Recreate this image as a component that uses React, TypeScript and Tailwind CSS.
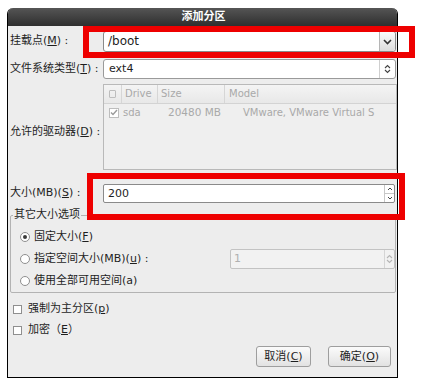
import React from 'react';

// small gray radio like the GTK Clearlooks one
const Radio = ({ checked }: { checked?: boolean }) => (
    <span className="w-[10px] h-[10px] rounded-full border border-[#8f8f8f] bg-white flex items-center justify-center shrink-0">
        {checked && <span className="w-[4px] h-[4px] rounded-full bg-[#3a3a3a]" />}
    </span>
);

const Check = () => (
    <span className="w-[9px] h-[9px] border border-[#8f8f8f] bg-white shrink-0" />
);

const DownArrow = () => (
    <svg width="9" height="6" viewBox="0 0 9 6">
        <path d="M1 1 L4.5 4.5 L8 1" fill="none" stroke="#333" strokeWidth="1.6" />
    </svg>
);

const UpDown = ({ color = '#444' }: { color?: string }) => (
    <svg width="7" height="10" viewBox="0 0 7 10">
        <path d="M1 4 L3.5 1.5 L6 4" fill="none" stroke={color} strokeWidth="1.1" />
        <path d="M1 6 L3.5 8.5 L6 6" fill="none" stroke={color} strokeWidth="1.1" />
    </svg>
);

const App: React.FC = () => {
    return (
        <div className="relative w-[423px] h-[389px] bg-white pt-[8px] pl-[7px] text-[11px] text-[#1e1e1e] font-['DejaVu_Sans','Noto_Sans_CJK_SC',sans-serif]">
            <div className="w-[391px] h-[370px] flex flex-col bg-[#ededed] border-x border-b border-black rounded-t-[6px] overflow-hidden">
                {/* title bar */}
                <div className="h-[18px] shrink-0 bg-gradient-to-b from-[#555555] to-[#2f2f2f] text-white font-bold text-[11px] leading-[18px] text-center pl-[2px]">
                    添加分区
                </div>

                <div className="flex flex-col pl-[2px]">
                    {/* mount point */}
                    <div className="flex items-center mt-[5px] h-[21px]">
                        <div className="w-[93px] whitespace-nowrap">挂载点(<u>M</u>) :</div>
                        <div className="flex w-[293px] h-[21px] bg-white border border-[#8a8a8a] rounded-[3px]">
                            <div className="flex-1 pl-[4px] leading-[19px] text-[12px]">/boot</div>
                            <div className="w-[16px] border-l border-[#b5b5b5] bg-gradient-to-b from-[#fafafa] to-[#dcdcdc] flex items-center justify-center rounded-r-[3px]">
                                <DownArrow />
                            </div>
                        </div>
                    </div>

                    {/* fs type */}
                    <div className="flex items-center mt-[7px] h-[20px]">
                        <div className="w-[93px] whitespace-nowrap">文件系统类型(<u>T</u>) :</div>
                        <div className="flex w-[293px] h-[20px] bg-white border border-[#9a9a9a] rounded-[3px]">
                            <div className="flex-1 pl-[5px] leading-[18px] text-[11px]">ext4</div>
                            <div className="w-[16px] border-l border-[#cfcfcf] flex items-center justify-center">
                                <UpDown />
                            </div>
                        </div>
                    </div>

                    {/* allowed drives */}
                    <div className="flex items-start mt-[5px]">
                        <div className="w-[93px] mt-[40px] whitespace-nowrap">允许的驱动器(<u>D</u>) :</div>
                        <div className="w-[294px] h-[86px] border border-[#b9b9b9] bg-[#efefef] text-[10px] text-[#a9a9a9]">
                            <div className="flex h-[19px] items-center border-b border-[#d3d3d3] bg-gradient-to-b from-[#f4f4f4] to-[#e8e8e8]">
                                <div className="w-[18px] h-full flex items-center justify-center border-r border-[#d6d6d6]">
                                    <span className="w-[7px] h-[8px] border border-[#bdbdbd] rounded-[1px]" />
                                </div>
                                <div className="w-[36px] h-full pl-[3px] leading-[18px] border-r border-[#d6d6d6]">Drive</div>
                                <div className="w-[67px] h-full pl-[3px] leading-[18px] border-r border-[#d6d6d6]">Size</div>
                                <div className="flex-1 pl-[4px] leading-[18px]">Model</div>
                            </div>
                            <div className="flex h-[17px] items-center">
                                <div className="w-[19px] pl-[5px] flex items-center">
                                    <span className="w-[10px] h-[10px] border border-[#bdbdbd] bg-white flex items-center justify-center">
                                        <svg width="8" height="7" viewBox="0 0 8 7">
                                            <path d="M1 3.5 L3 5.5 L7 1" fill="none" stroke="#9a9a9a" strokeWidth="1.4" />
                                        </svg>
                                    </span>
                                </div>
                                <div className="w-[36px]">sda</div>
                                <div className="w-[64px] text-right pr-[2px] text-[10.5px]">20480 MB</div>
                                <div className="flex-1 pl-[20px] whitespace-nowrap overflow-hidden">VMware, VMware Virtual S</div>
                            </div>
                        </div>
                    </div>

                    {/* size */}
                    <div className="flex items-center mt-[14px] h-[19px]">
                        <div className="w-[93px] whitespace-nowrap">大小(MB)(<u>S</u>) :</div>
                        <div className="flex w-[292px] h-[19px] bg-white border border-[#8a8a8a] rounded-[2px]">
                            <div className="flex-1 pl-[4px] leading-[17px] text-[11px]">200</div>
                            <div className="w-[10px] border-l border-[#c8c8c8] flex flex-col">
                                <div className="flex-1 flex items-center justify-center border-b border-[#c8c8c8]">
                                    <svg width="6" height="4" viewBox="0 0 6 4"><path d="M1 3 L3 1 L5 3" fill="none" stroke="#444" strokeWidth="1" /></svg>
                                </div>
                                <div className="flex-1 flex items-center justify-center">
                                    <svg width="6" height="4" viewBox="0 0 6 4"><path d="M1 1 L3 3 L5 1" fill="none" stroke="#444" strokeWidth="1" /></svg>
                                </div>
                            </div>
                        </div>
                    </div>

                    {/* other size options */}
                    <fieldset className="mt-[4px] ml-0 mr-[1px] border border-[#b3b3b3] rounded-[2px] p-0">
                        <legend className="ml-[2px] px-[1px] leading-[16px]">其它大小选项</legend>
                        <div className="pl-[9px] pt-[3px]">
                            <div className="flex items-center h-[22px] gap-[4px]">
                                <Radio checked />
                                <span>固定大小(<u>F</u>)</span>
                            </div>
                            <div className="flex items-center h-[22px] gap-[4px]">
                                <Radio />
                                <span className="w-[192px] whitespace-nowrap">指定空间大小(MB)(<u>u</u>) :</span>
                                <div className="flex w-[165px] h-[20px] bg-[#f2f2f2] border border-[#c3c3c3] rounded-[2px] text-[#b0b0b0]">
                                    <div className="flex-1 pl-[3px] leading-[18px]">1</div>
                                    <div className="w-[10px] border-l border-[#d5d5d5] flex items-center justify-center">
                                        <UpDown color="#b5b5b5" />
                                    </div>
                                </div>
                            </div>
                            <div className="flex items-center h-[22px] gap-[4px]">
                                <Radio />
                                <span>使用全部可用空间(a)</span>
                            </div>
                        </div>
                    </fieldset>

                    {/* checkboxes */}
                    <div className="mt-[6px] pl-[3px]">
                        <div className="flex items-center h-[21px] gap-[6px]">
                            <Check />
                            <span>强制为主分区(<u>p</u>)</span>
                        </div>
                        <div className="flex items-center h-[21px] gap-[6px]">
                            <Check />
                            <span>加密（<u>E</u>）</span>
                        </div>
                    </div>

                    {/* buttons */}
                    <div className="flex justify-end gap-[17px] pr-[6px] mt-[5px]">
                        <button className="w-[55px] h-[21px] border border-[#9e9e9e] rounded-[3px] bg-gradient-to-b from-[#fbfbfb] to-[#e2e2e2] text-[11px] leading-[19px]">
                            取消(<u>C</u>)
                        </button>
                        <button className="w-[63px] h-[21px] border border-[#9e9e9e] rounded-[3px] bg-gradient-to-b from-[#fbfbfb] to-[#e2e2e2] text-[11px] leading-[19px]">
                            确定(<u>O</u>)
                        </button>
                    </div>
                </div>
            </div>

            {/* red annotation frames */}
            <div className="absolute left-[83px] top-[26px] w-[332px] h-[32px] border-[6px] border-[#ee0000]" />
            <div className="absolute left-[87px] top-[173px] w-[318px] h-[47px] border-[6px] border-[#ee0000]" />
        </div>
    );
};

export default App;
